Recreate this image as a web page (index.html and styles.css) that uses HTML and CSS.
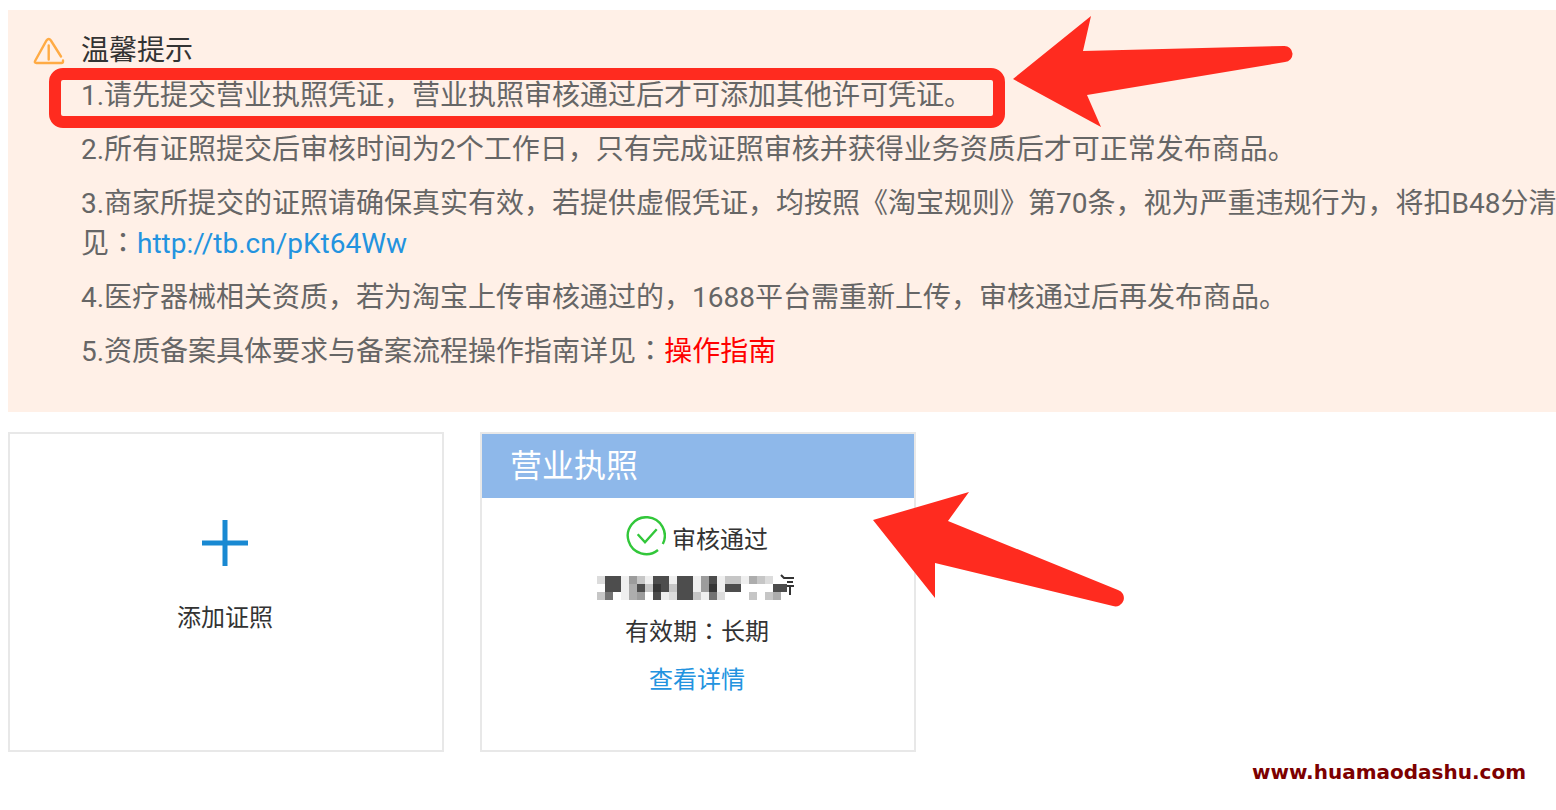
FILE: index.html
```html
<!DOCTYPE html>
<html lang="zh-CN">
<head>
<meta charset="utf-8">
<title>证照管理</title>
<link rel="stylesheet" href="styles.css">
</head>
<body>
<main class="page">
  <section class="notice">
    <svg class="notice-icon" viewBox="0 0 32 30" aria-hidden="true">
      <path d="M30 24.500v1q0 1.500-1.500 1.500H3.500q-2.500 0-1.300-2.200L13.500 4.500q2.200-3 4.400 0L28 20.500M15.700 9.500v14" />
    </svg>
    <div class="notice-body">
      <h1 class="notice-title">温馨提示</h1>
      <ol class="rules">
        <li><span class="marked">1.请先提交营业执照凭证，营业执照审核通过后才可添加其他许可凭证。<svg class="arrow arrow-rule" viewBox="0 0 280 112" aria-hidden="true"><path d="M0 63L78 0L70 35L271 30A8 8 0 0 1 272 46L74 79L88 111Z" /></svg></span></li>
        <li>2.所有证照提交后审核时间为2个工作日，只有完成证照审核并获得业务资质后才可正常发布商品。</li>
        <li>3.商家所提交的证照请确保真实有效，若提供虚假凭证，均按照《淘宝规则》第70条，视为严重违规行为，将扣B48分清<br>见<span class="colon" lang="ja">：</span><a class="link" href="http://tb.cn/pKt64Ww">http://tb.cn/pKt64Ww</a></li>
        <li>4.医疗器械相关资质，若为淘宝上传审核通过的，1688平台需重新上传，审核通过后再发布商品。</li>
        <li>5.资质备案具体要求与备案流程操作指南详见<span class="colon" lang="ja">：</span><a class="guide" href="#guide">操作指南</a></li>
      </ol>
    </div>
  </section>
  <section class="cards">
    <button class="card add" type="button">
      <svg class="plus" viewBox="0 0 46 46" aria-hidden="true"><path d="M23 0v46M0 23h46" /></svg>
      <span>添加证照</span>
    </button>
    <article class="card licence">
      <h2 class="licence-title">营业执照</h2>
      <div class="licence-body">
        <p class="status">
          <svg class="check" viewBox="0 0 40 40" aria-hidden="true"><path d="M36.800 28A18.500 18.500 0 1 0 32 34M11.700 18.300L19 26.300L30.700 13.300" /></svg>
          <span>审核通过</span>
        </p>
        <svg class="mosaic" viewBox="0 0 200 24" role="img" aria-label="名称已隐藏">
          <path fill="#4d4d4d" d="M8 0h16v16H8zM56 0h16v8H56zM64 8h8v8h-8zM56 16h8v8h-8zM80 0h16v24H80zM40 8h8v8h-8zM112 0h8v8h-8zM128 8h16v8h-16zM176 8h14v8h-14z" />
          <path fill="#363636" d="M56 8h8v8h-8zM112 8h8v8h-8z" />
          <path fill="#737373" d="M8 16h8v8H8zM112 16h8v8h-8z" />
          <path fill="#9c9c9c" d="M32 0h8v8h-8zM104 0h8v16h-8zM40 16h8v8h-8z" />
          <path fill="#adadad" d="M32 8h8v16h-8zM152 0h8v8h-8zM176 16h8v8h-8z" />
          <path fill="#c6c6c6" d="M40 0h8v8h-8zM48 8h8v8h-8zM72 8h8v8h-8zM96 16h8v8h-8zM0 16h8v8H0zM152 16h8v8h-8zM168 16h8v8h-8zM128 0h16v8h-16zM160 0h8v8h-8z" />
          <path fill="#dcdcdc" d="M0 0h8v8H0zM72 16h8v8h-8zM120 16h8v8h-8zM168 0h8v8h-8z" />
          <path fill="#efefef" d="M24 0h8v24h-8zM48 0h8v8h-8zM72 0h8v8h-8zM96 0h8v16h-8zM104 16h8v8h-8zM120 0h8v16h-8zM144 0h8v8h-8zM64 16h8v8h-8z" />
          <path fill="none" stroke="#333" stroke-width="2" d="M184-1l3 3h10M190 6h6M190 10h7M193 10v9" />
        </svg>
        <p>有效期<span class="colon" lang="ja">：</span>长期</p>
        <a class="link" href="#detail">查看详情</a>
      </div>
      <svg class="arrow arrow-card" viewBox="0 0 252 108" aria-hidden="true"><path d="M0 28L96 0L75 29L245 98A8 8 0 0 1 240 114L62 71L62 106Z" /></svg>
    </article>
  </section>
  <footer class="watermark">www.huamaodashu.com</footer>
</main>
</body>
</html>
```
FILE: styles.css
```css
body { margin: 0; background: #fff; color: #333; font-family: Roboto, "Noto Sans CJK SC", sans-serif; }
.page { padding: 10px 0 0 8px; overflow: hidden; }
.notice { display: flex; gap: 16px; padding: 21px 0 40px 25px; background: #fff0e7; }
.notice-icon { flex: none; width: 32px; height: 30px; margin-top: 5px; fill: none; stroke: #ffab45; stroke-width: 2.4; stroke-linecap: round; }
.notice-body { flex: 1; min-width: 0; font-size: 28px; line-height: 40px; }
.notice-title { margin: 0 0 5px; font-size: 28px; font-weight: 400; }
.rules { display: flex; flex-direction: column; gap: 14px; margin: 0; padding: 0; list-style: none; color: #666; white-space: nowrap; }
.colon { font-family: "Noto Sans CJK JP", sans-serif; line-height: 1; }
.link { color: #2393df; text-decoration: none; }
.guide { color: #f00; text-decoration: none; }
.marked { position: relative; }
.marked::before { content: ""; position: absolute; inset: -11px -33px -16px -32px; border: 12px solid #ff2b1f; border-radius: 14px; }
.arrow { position: absolute; overflow: visible; fill: #ff2b1f; }
.arrow-rule { left: calc(100% + 41px); top: -63px; width: 280px; height: 112px; }
.cards { display: flex; gap: 36px; margin-top: 20px; }
.card { position: relative; box-sizing: border-box; width: 436px; min-height: 320px; border: 2px solid #e8e8e8; background: #fff; font-size: 24px; line-height: 32px; }
.add { display: flex; flex-direction: column; align-items: center; gap: 36px; padding: 86px 2px 0 0; color: #333; font-family: inherit; }
.plus { width: 46px; height: 46px; fill: none; stroke: #1989d2; stroke-width: 5; }
.licence-title { margin: 0; padding: 0 28px; background: #8eb8ea; color: #fff; font-size: 32px; font-weight: 400; line-height: 64px; }
.licence-body { display: flex; flex-direction: column; align-items: center; gap: 16px; padding: 18px 2px 0 0; }
.licence-body p { margin: 0; }
.licence-body .status { display: flex; align-items: flex-end; gap: 6px; }
.check { width: 40px; height: 40px; fill: none; stroke: #32c73a; stroke-width: 2.4; }
.mosaic { width: 200px; height: 24px; padding-top: 4px; overflow: visible; }
.arrow-card { left: 391px; top: 58px; width: 252px; height: 108px; }
.watermark { padding: 8px 30px 0 0; color: #7d0000; font: 700 20px/24px "DejaVu Sans", sans-serif; text-align: right; }
```
